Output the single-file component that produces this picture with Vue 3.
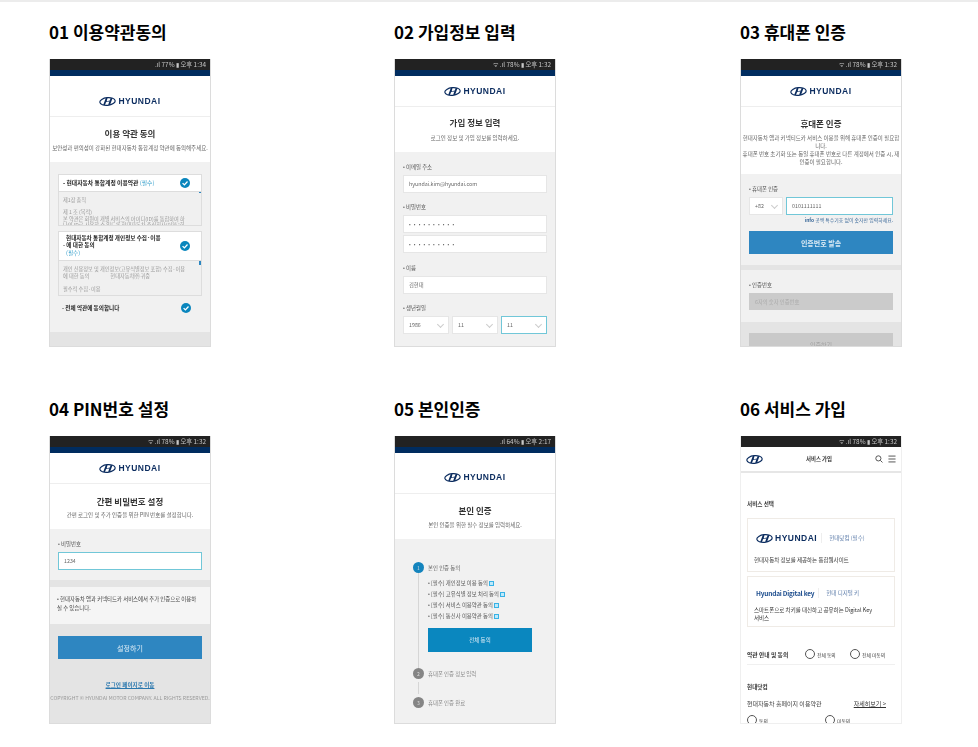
<script setup>
const agreeItems = [
  '[필수] 개인정보 이용 동의',
  '[필수] 고유식별 정보 처리 동의',
  '[필수] 서비스 이용약관 동의',
  '[필수] 통신사 이용약관 동의'
]
</script>

<template>
  <div class="page">
    <svg class="defs" width="0" height="0">
      <symbol id="emblem" viewBox="0 0 34 18">
        <ellipse cx="17" cy="9" rx="15.4" ry="7.6" fill="none" stroke="#0b2c5f" stroke-width="2.4" transform="rotate(-6 17 9)" />
        <path d="M13.6 2.2 L8.4 15.8 L12 15.8 L14 10.4 C17 9.6 19.5 9 20.8 8.6 L18.4 15.6 L22 15.8 L27 2.4 L23.4 2.2 L21.6 6.8 C19 7.8 16.6 8.2 15.4 8.4 L17 2.2 Z" fill="#0b2c5f" />
      </symbol>
    </svg>

    <section class="block">
      <h2>01 이용약관동의</h2>
      <div class="phone">
        <div class="status">.ıl 77% ▮ 오후 1:34</div>
        <div class="navy"></div>
        <div class="brand brand-tall">
          <svg class="emblem"><use href="#emblem" /></svg><span class="wordmark">HYUNDAI</span>
        </div>
        <div class="intro intro-terms">
          <h3>이용 약관 동의</h3>
          <p>보안성과 편의성이 강화된 현대자동차 통합계정 약관에 동의해주세요.</p>
        </div>
        <div class="gray terms">
          <div class="term-head">
            <span><b>- 현대자동차 통합계정 이용약관</b> <em>(필수)</em></span>
            <svg class="check" viewBox="0 0 10 10"><circle cx="5" cy="5" r="5" /><path d="M2.6 5.1 L4.4 6.9 L7.5 3.5" /></svg>
          </div>
          <div class="term-body body-first">
            <i class="scroll"></i>
            <p>제1장 총칙</p>
            <p>&nbsp;</p>
            <p>제 1 조 (목적)</p>
            <p>본 약관은 회원이 개별 서비스의 아이디(ID)를 통합하여 하</p>
            <p>나의 ID로 사용할 수 있도록 현대자동차 주식회사(이하 '회</p>
          </div>
          <div class="term-head term-head-big">
            <span class="term-lines">
              <b class="indent">현대자동차 통합계정 개인정보 수집·이용</b>
              <b>- 에 대한 동의</b>
              <em class="indent">(필수)</em>
            </span>
            <svg class="check" viewBox="0 0 10 10"><circle cx="5" cy="5" r="5" /><path d="M2.6 5.1 L4.4 6.9 L7.5 3.5" /></svg>
          </div>
          <div class="term-body body-second">
            <i class="scroll scroll-big"></i>
            <p>개인 신용정보 및 개인정보(고유식별정보 포함) 수집·이용</p>
            <p>에 대한 동의 <span class="gap">현대자동차㈜ 귀중</span></p>
            <p>&nbsp;</p>
            <p>필수적 수집·이용</p>
          </div>
          <div class="term-all">
            <b>- 전체 약관에 동의합니다</b>
            <svg class="check" viewBox="0 0 10 10"><circle cx="5" cy="5" r="5" /><path d="M2.6 5.1 L4.4 6.9 L7.5 3.5" /></svg>
          </div>
        </div>
        <div class="foot-gray foot-terms"></div>
      </div>
    </section>

    <section class="block">
      <h2>02 가입정보 입력</h2>
      <div class="phone">
        <div class="status">ᯤ .ıl 78% ▮ 오후 1:32</div>
        <div class="navy"></div>
        <div class="brand">
          <svg class="emblem"><use href="#emblem" /></svg><span class="wordmark">HYUNDAI</span>
        </div>
        <div class="intro intro-join">
          <h3>가입 정보 입력</h3>
          <p>로그인 정보 및 가입 정보를 입력하세요.</p>
        </div>
        <div class="gray form">
          <label>• 이메일 주소</label>
          <div class="field">hyundai.kim@hyundai.com</div>
          <label>• 비밀번호</label>
          <div class="field dots">• • • • • • • • • •</div>
          <div class="field field-next dots">• • • • • • • • • •</div>
          <label>• 이름</label>
          <div class="field">김현대</div>
          <label>• 생년월일</label>
          <div class="selects">
            <div class="field select">1986<i class="chev"></i></div>
            <div class="field select">11<i class="chev"></i></div>
            <div class="field select active">11<i class="chev"></i></div>
          </div>
        </div>
      </div>
    </section>

    <section class="block">
      <h2>03 휴대폰 인증</h2>
      <div class="phone">
        <div class="status">ᯤ .ıl 78% ▮ 오후 1:32</div>
        <div class="navy"></div>
        <div class="brand">
          <svg class="emblem"><use href="#emblem" /></svg><span class="wordmark">HYUNDAI</span>
        </div>
        <div class="intro intro-phone">
          <h3>휴대폰 인증</h3>
          <p>현대자동차 앱과 커넥티드카 서비스 이용을 위해 휴대폰 인증이 필요합<br />니다.<br />휴대폰 번호 초기화 또는 동일 휴대폰 번호로 다른 계정에서 인증 시, 재<br />인증이 필요합니다.</p>
        </div>
        <div class="gray form form-phone">
          <label>• 휴대폰 인증</label>
          <div class="selects">
            <div class="field select code">+82<i class="chev"></i></div>
            <div class="field active number">0101111111</div>
          </div>
          <div class="info"><b>info</b> 공백 특수기호 없이 숫자만 입력하세요.</div>
          <div class="btn btn-send">인증번호 발송</div>
        </div>
        <div class="band"></div>
        <div class="gray form form-code">
          <label>• 인증번호</label>
          <div class="field disabled">6자의 숫자 인증번호</div>
        </div>
        <div class="foot-gray foot-phone">
          <div class="btn btn-off">인증하기</div>
        </div>
      </div>
    </section>

    <section class="block">
      <h2>04 PIN번호 설정</h2>
      <div class="phone">
        <div class="status">ᯤ .ıl 78% ▮ 오후 1:32</div>
        <div class="navy"></div>
        <div class="brand">
          <svg class="emblem"><use href="#emblem" /></svg><span class="wordmark">HYUNDAI</span>
        </div>
        <div class="intro intro-pin">
          <h3>간편 비밀번호 설정</h3>
          <p>간편 로그인 및 추가 인증을 위한 PIN 번호를 설정합니다.</p>
        </div>
        <div class="gray form form-pin">
          <label>• 비밀번호</label>
          <div class="field active">1234</div>
        </div>
        <div class="band band-pin"></div>
        <div class="notice">• 현대자동차 앱과 커넥티드카 서비스에서 추가 인증으로 이용하<br />실 수 있습니다.</div>
        <div class="foot-gray foot-pin">
          <div class="btn btn-set">설정하기</div>
          <a class="login-link">로그인 페이지로 이동</a>
          <p class="copyright">COPYRIGHT © HYUNDAI MOTOR COMPANY. ALL RIGHTS RESERVED.</p>
        </div>
      </div>
    </section>

    <section class="block">
      <h2>05 본인인증</h2>
      <div class="phone">
        <div class="status">.ıl 64% ▮ 오후 2:17</div>
        <div class="navy"></div>
        <div class="brand brand-self">
          <svg class="emblem"><use href="#emblem" /></svg><span class="wordmark">HYUNDAI</span>
        </div>
        <div class="intro intro-self">
          <h3>본인 인증</h3>
          <p>본인 인증을 위한 필수 정보를 입력하세요.</p>
        </div>
        <div class="gray steps">
          <div class="step"><span class="num on">1</span><span>본인 인증 동의</span></div>
          <div class="step-content">
            <ul>
              <li v-for="item in agreeItems" :key="item">• {{ item }} <i class="mini"></i></li>
            </ul>
            <div class="btn btn-all">전체 동의</div>
          </div>
          <div class="step step-off"><span class="num">2</span><span>휴대폰 인증 정보 입력</span></div>
          <div class="step-line"></div>
          <div class="step step-off"><span class="num">3</span><span>휴대폰 인증 완료</span></div>
        </div>
      </div>
    </section>

    <section class="block">
      <h2>06 서비스 가입</h2>
      <div class="phone phone-white">
        <div class="status">ᯤ .ıl 78% ▮ 오후 1:32</div>
        <div class="topbar">
          <svg class="emblem emblem-top"><use href="#emblem" /></svg>
          <b>서비스 가입</b>
          <div class="top-icons">
            <svg viewBox="0 0 9 9" class="top-icon"><circle cx="3.8" cy="3.8" r="2.9" /><path d="M6 6 L8.4 8.4" /></svg>
            <svg viewBox="0 0 9 9" class="top-icon"><path d="M0.5 1.2 H8.5 M0.5 4.5 H8.5 M0.5 7.8 H8.5" /></svg>
          </div>
        </div>
        <div class="service">
          <h4>서비스 선택</h4>
          <div class="svc-card">
            <div class="svc-brand">
              <svg class="emblem"><use href="#emblem" /></svg><span class="wordmark">HYUNDAI</span>
              <i class="svc-sep"></i><span class="svc-name">현대닷컴 (필수)</span>
            </div>
            <p>현대자동차 정보를 제공하는 통합웹사이트</p>
          </div>
          <div class="svc-card svc-card-key">
            <div class="svc-brand">
              <span class="digital">Hyundai Digital key</span>
              <i class="svc-sep"></i><span class="svc-name">현대 디지털 키</span>
            </div>
            <p>스마트폰으로 차키를 대신하고 공유하는 Digital Key<br />서비스</p>
          </div>
          <div class="agree-row">
            <b>약관 안내 및 동의</b>
            <span class="radio-label"><i class="radio"></i>전체 동의</span>
            <span class="radio-label"><i class="radio"></i>전체 미동의</span>
          </div>
          <h4 class="dotcom">현대닷컴</h4>
          <div class="detail-row">
            <span>현대자동차 홈페이지 이용약관</span>
            <a>자세히보기 &gt;</a>
          </div>
          <div class="consent">
            <span class="radio-label"><i class="radio"></i>동의</span>
            <span class="radio-label"><i class="radio"></i>미동의</span>
          </div>
        </div>
      </div>
    </section>
  </div>
</template>

<style>
html, body {
  margin: 0;
  background: #fff;
}
</style>

<style scoped>
.page {
  box-sizing: border-box;
  width: 978px;
  height: 747px;
  overflow: hidden;
  border-top: 2px solid #ececec;
  padding: 18px 0 0 49px;
  display: grid;
  grid-template-columns: 345px 346px 162px;
  grid-auto-rows: max-content;
  row-gap: 50px;
  font-family: "Noto Sans CJK KR", "Noto Sans", sans-serif;
  color: #333;
}
.defs {
  position: absolute;
}
h2 {
  margin: 0 0 15px;
  font-size: 17px;
  line-height: 24px;
  font-weight: 700;
  color: #000;
}
.phone {
  box-sizing: border-box;
  width: 162px;
  height: 288px;
  border: 1px solid #dcdcdc;
  border-top: 0;
  overflow: hidden;
  display: flex;
  flex-direction: column;
  background: #fff;
  filter: blur(0.35px);
}
.phone-white {
  border-color: #efefef;
}
.status {
  flex: none;
  height: 11px;
  background: #222;
  color: #c8c8c8;
  font-size: 6.4px;
  line-height: 11px;
  text-align: right;
  padding-right: 4px;
}
.navy {
  flex: none;
  height: 6px;
  background: #002c5f;
}
.brand {
  flex: none;
  height: 31px;
  box-sizing: border-box;
  border-bottom: 1px solid #eee;
  display: flex;
  align-items: center;
  justify-content: center;
  gap: 2px;
}
.brand-tall {
  height: 41px;
  padding-top: 10px;
}
.brand-self {
  height: 41px;
  padding-top: 8px;
}
.emblem {
  width: 17px;
  height: 9px;
}
.wordmark {
  font-family: "Liberation Sans", sans-serif;
  font-weight: 700;
  font-size: 8.5px;
  line-height: 10px;
  letter-spacing: 0.5px;
  color: #0b2c5f;
}
.intro {
  flex: none;
  height: 45px;
  box-sizing: border-box;
  padding-top: 9px;
  text-align: center;
}
.intro h3 {
  margin: 0;
  font-size: 8.5px;
  line-height: 12px;
  font-weight: 700;
  color: #333;
}
.intro p {
  margin: 5px 0 0;
  font-size: 5.5px;
  line-height: 8px;
  color: #666;
  white-space: nowrap;
}
.intro-terms {
  padding-top: 10px;
}
.intro-join {
  padding-top: 9px;
}
.intro-join p {
  margin-top: 6px;
}
.intro-phone {
  height: 67px;
  padding-top: 10px;
}
.intro-pin {
  padding-top: 11px;
}
.intro-pin p {
  margin-top: 4px;
}
.intro-self {
  padding-top: 10px;
}
.gray {
  background: #f1f1f1;
}
.foot-gray {
  background: #e4e4e4;
}

/* 01 */
.terms {
  flex: 1;
  padding: 12px 8px 0;
}
.term-head {
  box-sizing: border-box;
  height: 18px;
  background: #fff;
  border: 1px solid #ddd;
  padding: 0 11px 0 4px;
  display: flex;
  align-items: center;
  justify-content: space-between;
  font-size: 5.8px;
  line-height: 7.5px;
}
.term-head b, .term-all b {
  color: #222;
}
.term-head em {
  font-style: normal;
  color: #2b9ac9;
}
.term-head-big {
  height: 30px;
  margin-top: 5px;
  padding-right: 11px;
  font-size: 5.6px;
}
.term-lines {
  display: flex;
  flex-direction: column;
}
.indent {
  padding-left: 3px;
}
.check {
  flex: none;
  width: 10px;
  height: 10px;
}
.check circle {
  fill: #0a86bd;
}
.check path {
  fill: none;
  stroke: #fff;
  stroke-width: 1.3;
}
.term-body {
  position: relative;
  box-sizing: border-box;
  background: #f0f0f0;
  border: 1px solid #ddd;
  border-top: 0;
  padding: 5px 4px 0;
  overflow: hidden;
  font-size: 5.2px;
  line-height: 6.2px;
  color: #999;
  white-space: nowrap;
}
.term-body p {
  margin: 0;
}
.body-first {
  height: 34px;
}
.body-second {
  height: 35px;
  line-height: 6.5px;
}
.gap {
  margin-left: 20px;
}
.scroll {
  position: absolute;
  top: 0;
  right: 0;
  width: 2px;
  height: 1px;
  background: #2b86c1;
}
.scroll-big {
  height: 4px;
}
.term-all {
  height: 24px;
  display: flex;
  align-items: center;
  justify-content: space-between;
  padding: 0 11px 0 4px;
  font-size: 5.6px;
}
.foot-terms {
  flex: none;
  height: 14px;
}

/* forms */
.form {
  box-sizing: border-box;
  padding: 11px 8px 0;
  flex: 1;
}
label {
  display: block;
  height: 8px;
  margin-bottom: 4px;
  font-size: 5.4px;
  line-height: 8px;
  color: #555;
}
.field {
  box-sizing: border-box;
  height: 18px;
  margin: 0 0 10px;
  padding: 0 5px;
  background: #fff;
  border: 1px solid #e6e6e6;
  font-size: 5.3px;
  line-height: 16px;
  color: #666;
}
.dots {
  margin-bottom: 2px;
  font-size: 5px;
  word-spacing: 2px;
  color: #555;
}
.field-next {
  margin-bottom: 11px;
}
.selects {
  display: flex;
  gap: 3px;
}
.select {
  position: relative;
  flex: 1;
  margin: 0;
}
.chev {
  position: absolute;
  right: 5px;
  top: 5px;
  width: 4px;
  height: 4px;
  border-right: 1px solid #ccc;
  border-bottom: 1px solid #ccc;
  transform: rotate(45deg);
}
.active {
  border-color: #71c7d8;
}
.form-phone {
  flex: none;
  height: 91px;
}
.code {
  flex: none;
  width: 34px;
}
.number {
  flex: 1;
  margin: 0;
}
.info {
  margin-top: 1px;
  text-align: right;
  font-size: 4.9px;
  line-height: 7px;
  color: #3c6a9a;
}
.btn {
  box-sizing: border-box;
  display: flex;
  align-items: center;
  justify-content: center;
  color: #dcebf5;
  font-weight: 700;
  font-size: 7px;
}
.btn-send {
  height: 23px;
  margin-top: 8px;
  background: #2e86c1;
}
.band {
  flex: none;
  height: 5px;
  background: #e4e4e4;
}
.form-code {
  flex: none;
  height: 52px;
}
.disabled {
  height: 17px;
  background: #cbcbcb;
  border-color: #cbcbcb;
  color: #aaa;
  margin: 0;
}
.foot-phone {
  flex: 1;
  padding: 11px 8px 0;
}
.btn-off {
  height: 23px;
  background: #c9c9c9;
  color: #a0a0a0;
  font-weight: 400;
  font-size: 6px;
}

/* 04 */
.form-pin {
  flex: none;
  height: 51px;
}
.band-pin {
  height: 7px;
}
.notice {
  flex: none;
  box-sizing: border-box;
  height: 37px;
  padding: 8px 7px 0;
  background: #f5f5f5;
  font-size: 5.4px;
  line-height: 9px;
  color: #444;
  white-space: nowrap;
}
.foot-pin {
  flex: 1;
  padding: 12px 8px 0;
  text-align: center;
}
.btn-set {
  height: 23px;
  background: #2e86c1;
  font-weight: 400;
}
.login-link {
  display: block;
  margin-top: 22px;
  font-size: 5.6px;
  line-height: 8px;
  font-weight: 700;
  color: #2b78ae;
  text-decoration: underline;
}
.copyright {
  margin: 5px -8px 0;
  font-size: 5.2px;
  line-height: 8px;
  white-space: nowrap;
  color: #9a9a9a;
}

/* 05 */
.steps {
  flex: 1;
  padding: 23px 0 0 18px;
}
.step {
  display: flex;
  align-items: center;
  gap: 4px;
  height: 11px;
  font-size: 5.4px;
  color: #666;
}
.step-off {
  color: #888;
}
.num {
  flex: none;
  width: 11px;
  height: 11px;
  border-radius: 50%;
  background: #858585;
  color: #ddd;
  font-size: 5px;
  line-height: 11px;
  text-align: center;
}
.num.on {
  background: #1484bd;
}
.step-content {
  margin-left: 5px;
  padding: 5px 0 16px 9px;
  border-left: 1px solid #d6d6d6;
}
.step-content ul {
  margin: 0;
  padding: 0;
  list-style: none;
}
.step-content li {
  height: 11px;
  font-size: 5.4px;
  line-height: 11px;
  color: #555;
  white-space: nowrap;
}
.mini {
  display: inline-block;
  box-sizing: border-box;
  width: 5px;
  height: 5px;
  border: 1px solid #37b2e6;
  background: #bfe9fa;
  vertical-align: -1px;
}
.btn-all {
  width: 104px;
  height: 24px;
  margin-top: 6px;
  background: #0a87bf;
  font-weight: 400;
  font-size: 5.5px;
}
.step-line {
  width: 1px;
  height: 12px;
  margin: 3px 0 3px 5px;
  background: #d6d6d6;
}

/* 06 */
.topbar {
  flex: none;
  height: 24px;
  border-bottom: 2px solid #e6e6e6;
  display: flex;
  align-items: center;
  padding: 0 5px;
  position: relative;
}
.topbar b {
  flex: 1;
  text-align: center;
  font-size: 5.4px;
  color: #333;
}
.top-icons {
  display: flex;
  gap: 5px;
}
.top-icon {
  width: 8px;
  height: 8px;
  fill: none;
  stroke: #444;
  stroke-width: 1;
}
.service {
  flex: 1;
  padding: 27px 6px 0;
}
h4 {
  margin: 0;
  font-size: 5.6px;
  line-height: 8px;
  font-weight: 700;
  color: #333;
}
.svc-card {
  box-sizing: border-box;
  height: 54px;
  margin-top: 10px;
  padding: 14px 6px 0 6px;
  border: 1px solid #efebe6;
}
.svc-card p {
  margin: 13px 0 0;
  font-size: 5.5px;
  line-height: 8px;
  color: #333;
  white-space: nowrap;
}
.svc-card-key {
  height: 51px;
  margin-top: 4px;
  padding-top: 11px;
}
.svc-card-key p {
  margin-top: 8px;
}
.svc-brand {
  display: flex;
  align-items: center;
  gap: 2px;
  height: 10px;
  margin-left: 2px;
}
.svc-sep {
  width: 1px;
  height: 10px;
  margin: 0 5px 0 2px;
  background: #eee;
}
.svc-name {
  font-size: 5.5px;
  color: #5a7aa8;
  white-space: nowrap;
}
.digital {
  font-size: 6.5px;
  font-weight: 700;
  letter-spacing: -0.2px;
  color: #1f4f8f;
  white-space: nowrap;
}
.agree-row {
  display: flex;
  align-items: center;
  height: 20px;
  margin-top: 17px;
  border-bottom: 1px solid #f0f0f0;
  font-size: 5.8px;
}
.agree-row b {
  width: 58px;
  flex: none;
  color: #333;
}
.radio-label {
  display: inline-flex;
  align-items: center;
  gap: 2px;
  width: 46px;
  font-size: 4.8px;
  color: #444;
  white-space: nowrap;
}
.radio {
  flex: none;
  width: 8px;
  height: 8px;
  border: 1px solid #555;
  border-radius: 50%;
}
.dotcom {
  margin-top: 18px;
}
.detail-row {
  display: flex;
  justify-content: space-between;
  margin-top: 8px;
  font-size: 6px;
  line-height: 9px;
  color: #444;
  padding-right: 9px;
}
.detail-row a {
  text-decoration: underline;
  color: #333;
}
.consent {
  display: flex;
  gap: 32px;
  margin-top: 7px;
}
</style>
